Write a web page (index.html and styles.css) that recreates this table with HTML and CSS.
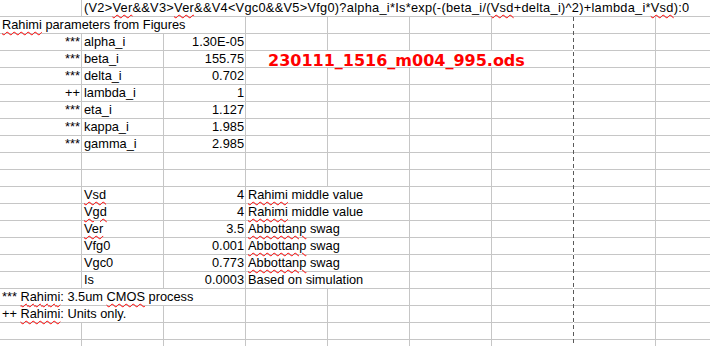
FILE: index.html
```html
<!DOCTYPE html>
<html>
<head>
<meta charset="utf-8">
<link rel="stylesheet" href="styles.css">
</head>
<body>
<div class="sheet">
  <div class="row">
    <div class="c"></div>
    <div class="c s8 formula">(V2&gt;<span class="sp">Ver</span>&amp;&amp;V3&gt;<span class="sp">Ver</span>&amp;&amp;V4&lt;Vgc0&amp;&amp;V5&gt;Vfg0)?alpha_i*Is*exp(-(beta_i/(<span class="sp">Vsd</span>+delta_i)^2)+lambda_i*<span class="sp">Vsd</span>):0</div>
  </div>
  <div class="row">
    <div class="c s3"><span class="sp">Rahimi</span> parameters from Figures</div>
    <div class="c"></div><div class="c"></div><div class="c"></div><div class="c"></div><div class="c"></div><div class="c"></div>
  </div>
  <div class="row">
    <div class="c r">***</div><div class="c">alpha_i</div><div class="c r">1.30E-05</div>
    <div class="c"></div><div class="c"></div><div class="c"></div><div class="c"></div><div class="c"></div><div class="c"></div>
  </div>
  <div class="row">
    <div class="c r">***</div><div class="c">beta_i</div><div class="c r">155.75</div>
    <div class="c s4 title">230111_1516_m004_995.ods</div>
    <div class="c"></div><div class="c"></div>
  </div>
  <div class="row">
    <div class="c r">***</div><div class="c">delta_i</div><div class="c r">0.702</div>
    <div class="c"></div><div class="c"></div><div class="c"></div><div class="c"></div><div class="c"></div><div class="c"></div>
  </div>
  <div class="row">
    <div class="c r">++</div><div class="c">lambda_i</div><div class="c r">1</div>
    <div class="c"></div><div class="c"></div><div class="c"></div><div class="c"></div><div class="c"></div><div class="c"></div>
  </div>
  <div class="row">
    <div class="c r">***</div><div class="c">eta_i</div><div class="c r">1.127</div>
    <div class="c"></div><div class="c"></div><div class="c"></div><div class="c"></div><div class="c"></div><div class="c"></div>
  </div>
  <div class="row">
    <div class="c r">***</div><div class="c">kappa_i</div><div class="c r">1.985</div>
    <div class="c"></div><div class="c"></div><div class="c"></div><div class="c"></div><div class="c"></div><div class="c"></div>
  </div>
  <div class="row">
    <div class="c r">***</div><div class="c">gamma_i</div><div class="c r">2.985</div>
    <div class="c"></div><div class="c"></div><div class="c"></div><div class="c"></div><div class="c"></div><div class="c"></div>
  </div>
  <div class="row">
    <div class="c"></div><div class="c"></div><div class="c"></div><div class="c"></div><div class="c"></div><div class="c"></div><div class="c"></div><div class="c"></div><div class="c"></div>
  </div>
  <div class="row">
    <div class="c"></div><div class="c"></div><div class="c"></div><div class="c"></div><div class="c"></div><div class="c"></div><div class="c"></div><div class="c"></div><div class="c"></div>
  </div>
  <div class="row">
    <div class="c"></div><div class="c"><span class="sp">Vsd</span></div><div class="c r">4</div>
    <div class="c s2"><span class="sp">Rahimi</span> middle value</div>
    <div class="c"></div><div class="c"></div><div class="c"></div><div class="c"></div>
  </div>
  <div class="row">
    <div class="c"></div><div class="c"><span class="sp">Vgd</span></div><div class="c r">4</div>
    <div class="c s2"><span class="sp">Rahimi</span> middle value</div>
    <div class="c"></div><div class="c"></div><div class="c"></div><div class="c"></div>
  </div>
  <div class="row">
    <div class="c"></div><div class="c"><span class="sp">Ver</span></div><div class="c r">3.5</div>
    <div class="c s2"><span class="sp">Abbottanp</span> swag</div>
    <div class="c"></div><div class="c"></div><div class="c"></div><div class="c"></div>
  </div>
  <div class="row">
    <div class="c"></div><div class="c">Vfg0</div><div class="c r">0.001</div>
    <div class="c s2"><span class="sp">Abbottanp</span> swag</div>
    <div class="c"></div><div class="c"></div><div class="c"></div><div class="c"></div>
  </div>
  <div class="row">
    <div class="c"></div><div class="c">Vgc0</div><div class="c r">0.773</div>
    <div class="c s2"><span class="sp">Abbottanp</span> swag</div>
    <div class="c"></div><div class="c"></div><div class="c"></div><div class="c"></div>
  </div>
  <div class="row">
    <div class="c"></div><div class="c">Is</div><div class="c r">0.0003</div>
    <div class="c s2">Based on simulation</div>
    <div class="c"></div><div class="c"></div><div class="c"></div><div class="c"></div>
  </div>
  <div class="row">
    <div class="c s3">*** <span class="sp">Rahimi</span>: 3.5um <span class="sp">CMOS</span> process</div>
    <div class="c"></div><div class="c"></div><div class="c"></div><div class="c"></div><div class="c"></div><div class="c"></div>
  </div>
  <div class="row">
    <div class="c s2">++ <span class="sp">Rahimi</span>: Units only.</div>
    <div class="c"></div><div class="c"></div><div class="c"></div><div class="c"></div><div class="c"></div><div class="c"></div><div class="c"></div>
  </div>
  <div class="row">
    <div class="c"></div><div class="c"></div><div class="c"></div><div class="c"></div><div class="c"></div><div class="c"></div><div class="c"></div><div class="c"></div><div class="c"></div>
  </div>
  <div class="row">
    <div class="c"></div><div class="c"></div><div class="c"></div><div class="c"></div><div class="c"></div><div class="c"></div><div class="c"></div><div class="c"></div><div class="c"></div>
  </div>
  <div class="pagebreak"></div>
</div>
</body>
</html>
```

FILE: styles.css
```css
html, body {
  margin: 0;
  padding: 0;
  background: #ffffff;
  overflow: hidden;
  width: 710px;
  height: 346px;
}

.sheet {
  position: relative;
  font-family: "Liberation Sans", Arial, sans-serif;
  font-size: 12.8px;
  color: #000000;
}

.row {
  display: grid;
  grid-template-columns: repeat(9, 82px);
  height: 17px;
}

.c {
  box-sizing: border-box;
  height: 17px;
  border-right: 1px solid #c6c6c6;
  border-bottom: 1px solid #c6c6c6;
  padding: 0 1px 0 2px;
  line-height: 16px;
  white-space: nowrap;
  overflow: visible;
}

.formula {
  letter-spacing: 0.27px;
}

.r {
  text-align: right;
}

.s2 { grid-column: span 2; }
.s3 { grid-column: span 3; }
.s4 { grid-column: span 4; }
.s8 { grid-column: span 8; }

.sp {
  text-decoration: underline wavy #ff0000;
  text-decoration-thickness: 1px;
  text-underline-offset: 2px;
}

.title {
  font-family: "DejaVu Sans", sans-serif;
  font-weight: bold;
  font-size: 16px;
  color: #ff0000;
  padding-left: 22px;
  padding-top: 2px;
}

.pagebreak {
  position: absolute;
  left: 573px;
  top: 17px;
  bottom: 0;
  width: 1px;
  background: repeating-linear-gradient(to bottom, #5a5a5a 0, #5a5a5a 4px, #ffffff 4px, #ffffff 7px);
}
```
